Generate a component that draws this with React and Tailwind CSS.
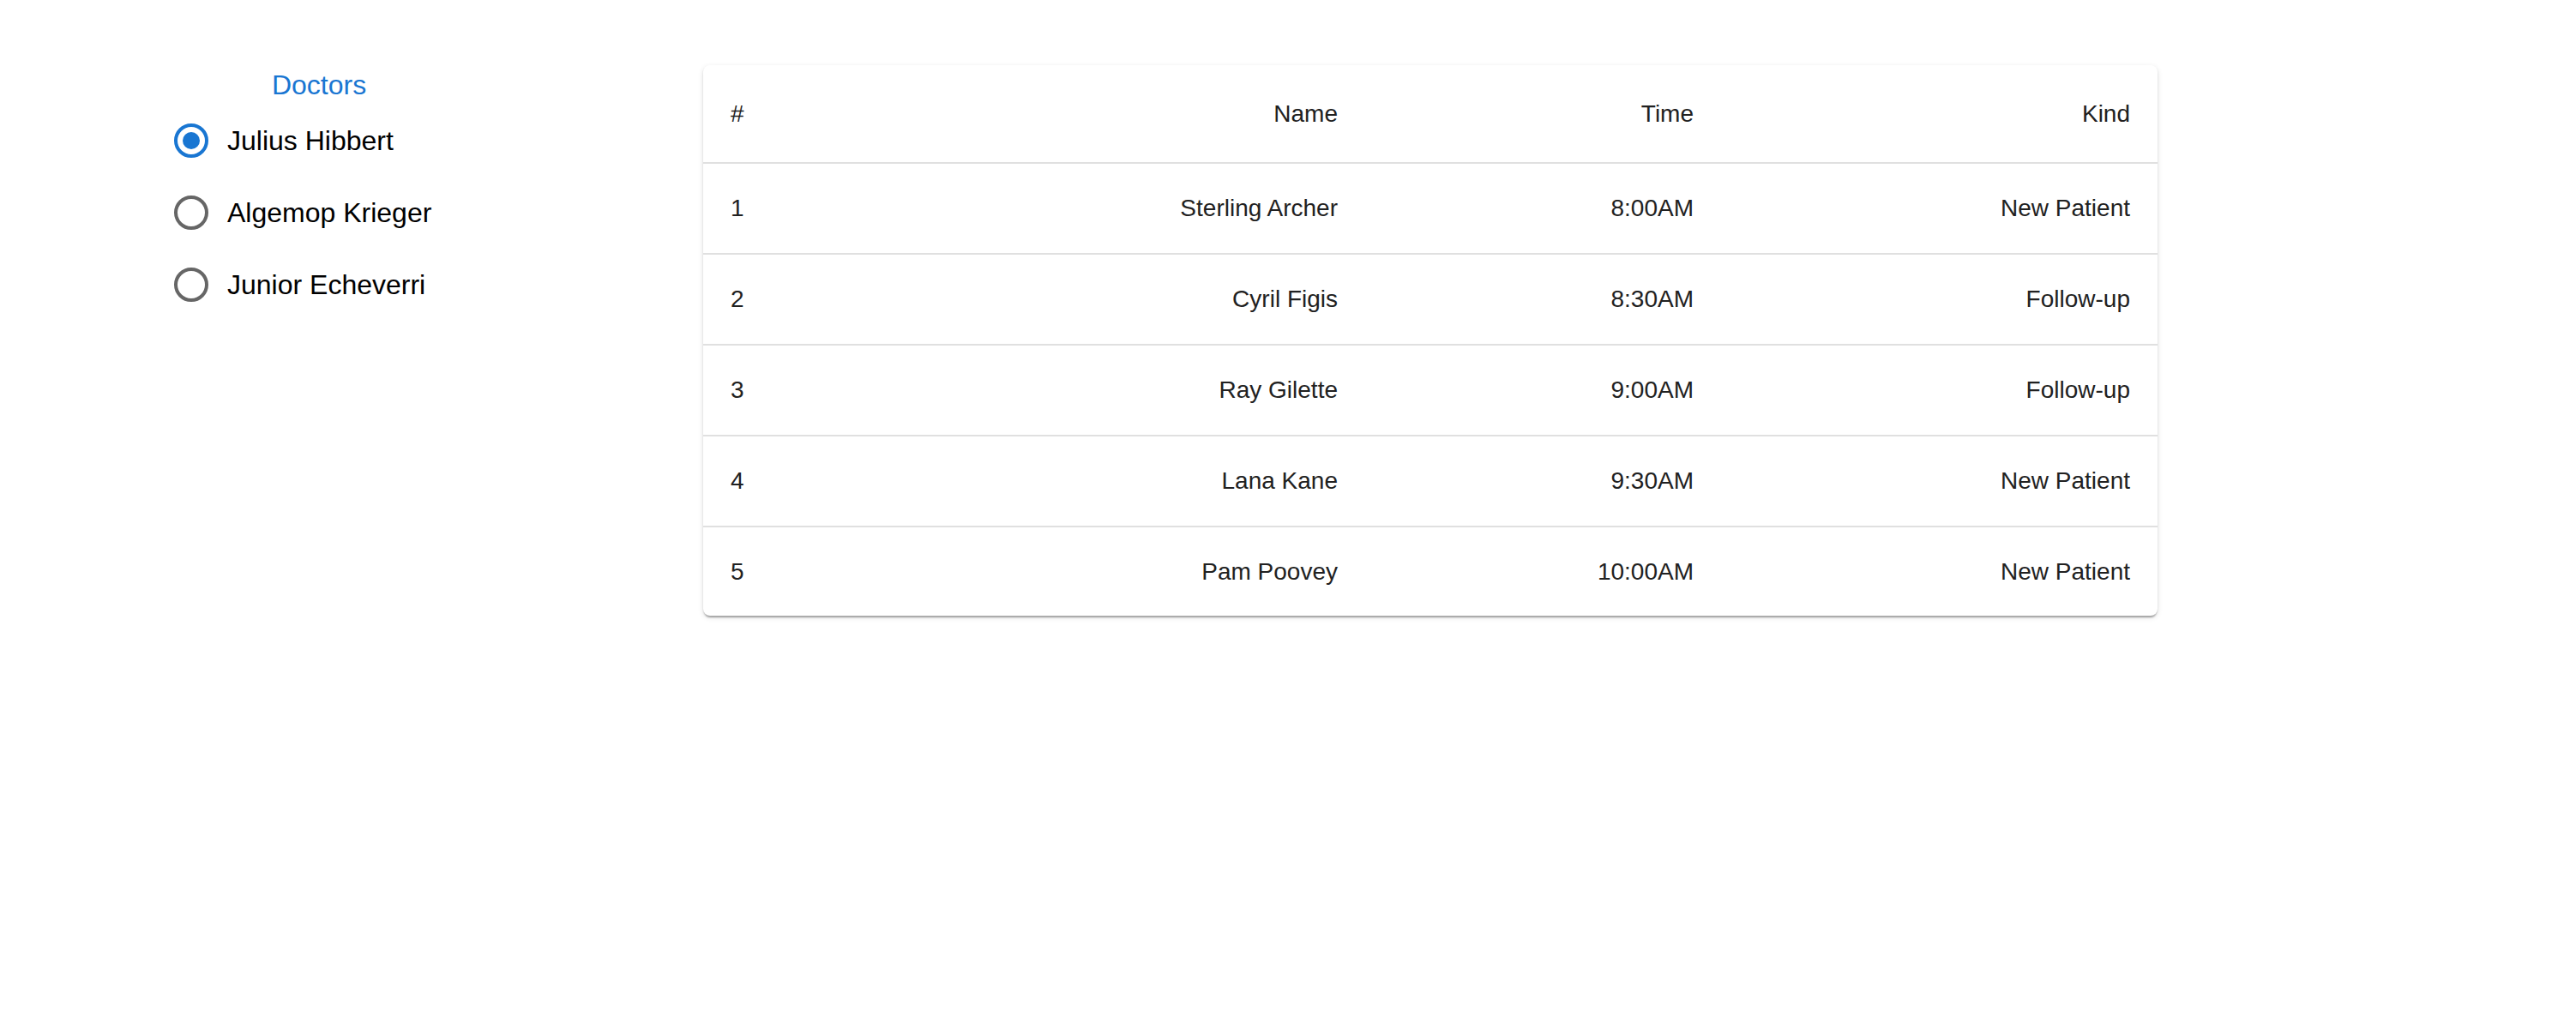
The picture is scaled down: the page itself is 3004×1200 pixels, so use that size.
import React from "react";

const rows = [
  ["1", "Sterling Archer", "8:00AM", "New Patient"],
  ["2", "Cyril Figis", "8:30AM", "Follow-up"],
  ["3", "Ray Gilette", "9:00AM", "Follow-up"],
  ["4", "Lana Kane", "9:30AM", "New Patient"],
  ["5", "Pam Poovey", "10:00AM", "New Patient"],
];

const doctors = ["Julius Hibbert", "Algemop Krieger", "Junior Echeverri"];

function RadioIcon({ checked }) {
  return (
    <svg width="48" height="48" viewBox="0 0 24 24" className="block">
      <circle
        cx="12"
        cy="12"
        r="9"
        fill="none"
        stroke={checked ? "#1976d2" : "#666666"}
        strokeWidth="2"
      />
      {checked && <circle cx="12" cy="12" r="5" fill="#1976d2" />}
    </svg>
  );
}

export default function App() {
  return (
    <div className="min-h-[1200px] w-[3004px] bg-white font-['Liberation_Sans',Arial,sans-serif] text-[#212121]">
      <div className="flex items-start pt-[76px]">
        <div className="ml-[181px] w-[382px] flex flex-col">
          <div className="text-center text-[32px] leading-[46px] text-[#1976d2]">
            Doctors
          </div>
          <div className="flex flex-col">
            {doctors.map((d, i) => (
              <div key={d} className="flex h-[84px] items-center">
                <div className="p-[18px]">
                  <RadioIcon checked={i === 0} />
                </div>
                <span className="text-[32px] leading-[48px] text-black">{d}</span>
              </div>
            ))}
          </div>
        </div>
        <div className="ml-[257px] w-[1696px] overflow-hidden rounded-[8px] bg-white shadow-[0_4px_2px_-2px_rgba(0,0,0,0.2),0_2px_2px_0_rgba(0,0,0,0.14),0_2px_6px_0_rgba(0,0,0,0.12)]">
          <table className="w-full table-fixed border-collapse text-[28px]">
            <colgroup>
              <col className="w-[300px]" />
              <col className="w-[472px]" />
              <col className="w-[415px]" />
              <col className="w-[509px]" />
            </colgroup>
            <thead>
              <tr className="h-[114px] border-b-2 border-[#e0e0e0]">
                <th className="px-[32px] text-left font-normal leading-[48px]">#</th>
                <th className="px-[32px] text-right font-normal leading-[48px]">Name</th>
                <th className="px-[32px] text-right font-normal leading-[48px]">Time</th>
                <th className="px-[32px] text-right font-normal leading-[48px]">Kind</th>
              </tr>
            </thead>
            <tbody>
              {rows.map((r, i) => (
                <tr
                  key={r[0]}
                  className={
                    i < rows.length - 1
                      ? "h-[106px] border-b-2 border-[#e0e0e0]"
                      : "h-[104px]"
                  }
                >
                  <td className="px-[32px] text-left leading-[40px]">{r[0]}</td>
                  <td className="px-[32px] text-right leading-[40px]">{r[1]}</td>
                  <td className="px-[32px] text-right leading-[40px]">{r[2]}</td>
                  <td className="px-[32px] text-right leading-[40px]">{r[3]}</td>
                </tr>
              ))}
            </tbody>
          </table>
        </div>
      </div>
    </div>
  );
}
